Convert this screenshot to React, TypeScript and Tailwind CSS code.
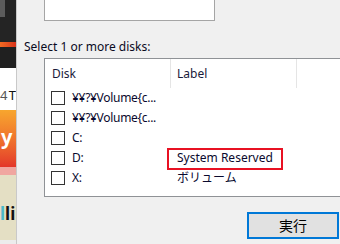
import React from 'react';

const font = { fontFamily: '"Segoe UI", "Noto Sans", "Noto Sans CJK JP", sans-serif' };

const rows = [
  { disk: '¥¥?¥Volume{c...', label: '' },
  { disk: '¥¥?¥Volume{c...', label: '' },
  { disk: 'C:', label: '' },
  { disk: 'D:', label: 'System Reserved', marked: true },
  { disk: 'X:', label: 'ボリューム' },
];

const App: React.FC = () => {
  return (
    <div
      className="w-[340px] h-[244px] flex overflow-hidden text-[12px] leading-[16px] text-black"
      style={font}
    >
      {/* background window peeking through on the left */}
      <div className="w-[16px] shrink-0 flex flex-col overflow-hidden">
        <div className="h-[42px] bg-[#242424] relative">
          <div className="w-[5px] h-[17px] bg-[#5c5c5c]" />
        </div>
        <div className="h-[5px] bg-gradient-to-r from-[#f26a22] to-[#d8321c]" />
        <div className="h-[21px] bg-[#202020]" />
        <div className="h-[42px] bg-white flex items-end pb-[8px]">
          <span className="text-[13px] leading-[14px] text-[#555] whitespace-nowrap tracking-[-1px]">
            4 <span className="text-[#111]">T</span>
          </span>
        </div>
        <div className="h-[57px] bg-gradient-to-b from-[#f7a62e] to-[#e3352a] flex items-center">
          <span className="text-white font-bold text-[20px] leading-[20px] -mt-[4px] pl-[1px]">y</span>
        </div>
        <div className="h-[8px] bg-[#f0a6a0]" />
        <div className="flex-1 bg-[#e4dfc4] flex flex-col">
          <div className="h-[30px]" />
          <span className="font-bold text-[17px] leading-[17px] text-[#111] whitespace-nowrap">
            <span className="text-[#4bb8c8]">l</span>li
          </span>
          <div className="flex-1" />
          <div className="h-[4px] bg-[#ececec]" />
        </div>
      </div>
      <div className="w-px shrink-0 bg-[#c9c9c9]" />

      {/* dialog */}
      <div className="flex-1 bg-[#f0f0f0] flex flex-col">
        <div className="ml-[27px] w-[171px] h-[21px] bg-white border border-t-0 border-[#a5a5a5]" />

        <div className="ml-[7px] mt-[18px] whitespace-nowrap text-[#0a0a1e]">Select 1 or more disks:</div>

        <div className="ml-[27px] mt-[3px] w-[300px] h-[139px] shrink-0 bg-white border border-[#8f9296] border-r-0">
          <div className="h-[29px] flex">
            <div className="w-[125px] pl-[7px] flex items-center text-[#1a1a3a]">Disk</div>
            <div className="w-px bg-[#e5e5e5]" />
            <div className="w-[125px] pl-[6px] flex items-center text-[#1a1a3a]">Label</div>
            <div className="w-px bg-[#e5e5e5]" />
          </div>
          {rows.map((r, i) => (
            <div key={i} className="relative h-[20px] flex items-center">
              <div className="w-[125px] pl-[6px] flex items-center gap-[7px] text-[#0a0a2e] whitespace-nowrap">
                <div className="w-[14px] h-[14px] border border-[#333] bg-white shrink-0" />
                <span className="tracking-[-0.3px]">{r.disk}</span>
              </div>
              <div className="w-px" />
              <div className="pl-[6px] whitespace-nowrap text-[#0a0a2e]">{r.label}</div>
              {r.marked && (
                <div className="absolute left-[122px] top-0 w-[116px] h-[22px] border-2 border-[#e81123]" />
              )}
            </div>
          ))}
        </div>

        <button
          type="button"
          className="ml-[230px] mt-[15px] w-[92px] h-[27px] shrink-0 bg-[#e1e1e1] border-2 border-[#0078d7] text-[14px] text-black flex items-center justify-center"
          style={font}
        >
          実行
        </button>
      </div>
    </div>
  );
};

export default App;
